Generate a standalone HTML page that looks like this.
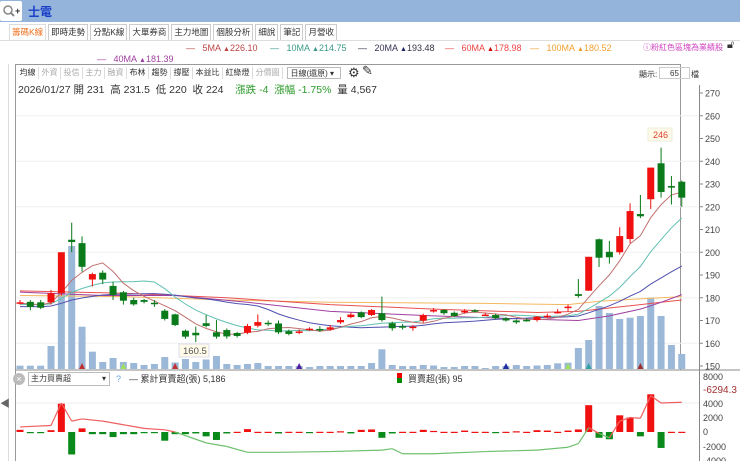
<!DOCTYPE html>
<html><head><meta charset="utf-8">
<style>
*{margin:0;padding:0;box-sizing:border-box}
body{width:740px;height:461px;overflow:hidden;background:#fff;font-family:"Liberation Sans","Noto Sans CJK TC",sans-serif;position:relative;font-size:10px;color:#333}
.top{position:absolute;left:0;top:0;width:740px;height:22px;background:#95b4dc}
.srch{position:absolute;left:0;top:1px;width:22px;height:20px;background:#fff;border-radius:2px}
.title{position:absolute;left:28px;top:3px;font-size:12px;font-weight:bold;color:#1a3fc8}
.tabs{position:absolute;left:9px;top:24px;height:17px;display:flex}
.tab{border:1px solid #ccc;border-bottom:none;padding:0 2px;height:16px;line-height:15px;font-size:8.5px;color:#333;margin-right:2px;background:#fff}
.tab.a{color:#f07020;border-color:#ddd}
.abs{position:absolute;white-space:nowrap}
.frame{position:absolute;left:15px;top:64px;width:666px;height:306px;border-left:1px solid #999;border-top:1px solid #999;border-right:1px solid #999}
.tb{position:absolute;left:17px;top:67px;display:flex;font-size:8px}
.tb span{padding:0 2.5px;border-right:1px solid #ddd;height:12px;line-height:12px}
.g{color:#aaa}
</style></head><body>
<div class="top"></div>
<div class="srch"><svg width="22" height="20"><circle cx="8" cy="9" r="4" fill="none" stroke="#888" stroke-width="1.5"/><line x1="11" y1="12" x2="14" y2="15" stroke="#888" stroke-width="2"/><text x="15" y="13" font-size="9" font-weight="bold" fill="#333">+</text></svg></div>
<div class="title">士電</div>
<div class="tabs">
<div class="tab a">籌碼K線</div><div class="tab">即時走勢</div><div class="tab">分點K線</div><div class="tab">大單券商</div><div class="tab">主力地圖</div><div class="tab">個股分析</div><div class="tab">細說</div><div class="tab">筆記</div><div class="tab">月營收</div>
</div>
<div class="abs" style="left:0;top:40px;width:740px;border-top:1px solid #ddd"></div>
<div class="abs" style="left:186px;top:43px;font-size:9px;color:#b44">—&nbsp;&nbsp; 5MA <span style="font-size:7px">▲</span>226.10</div>
<div class="abs" style="left:270px;top:43px;font-size:9px;color:#3a9a8a">—&nbsp;&nbsp; 10MA <span style="font-size:7px">▲</span>214.75</div>
<div class="abs" style="left:358px;top:43px;font-size:9px;color:#334">—&nbsp;&nbsp; <span style="color:#335">20MA</span> <span style="font-size:7px;color:#226">▲</span>193.48</div>
<div class="abs" style="left:445px;top:43px;font-size:9px;color:#e44">—&nbsp;&nbsp; 60MA <span style="font-size:7px;color:#c00">▲</span>178.98</div>
<div class="abs" style="left:530px;top:43px;font-size:9px;color:#f0a030">—&nbsp;&nbsp; 100MA <span style="font-size:7px">▲</span>180.52</div>
<div class="abs" style="left:643px;top:42px;font-size:8px;color:#d040c0">ⓘ粉紅色區塊為業績股</div>
<div class="abs" style="left:727px;top:39px;font-size:11px">🔓︎</div>
<div class="abs" style="left:97px;top:54px;font-size:9px;color:#a040a0">—&nbsp;&nbsp; 40MA <span style="font-size:7px">▲</span>181.39</div>
<div class="frame"></div>
<div class="abs" style="left:8px;top:64px;height:397px;border-left:1px solid #ddd"></div>
<div class="tb"><span>均線</span><span class="g">外資</span><span class="g">投信</span><span class="g">主力</span><span class="g">融資</span><span>布林</span><span>趨勢</span><span>撐壓</span><span>本益比</span><span>紅綠燈</span><span class="g">分價圖</span>
<span style="border:1px solid #bbb;margin-left:4px;width:54px">日線(還原) ▾</span></div>
<div class="abs" style="left:348px;top:65px;font-size:13px;color:#333">⚙︎</div>
<div class="abs" style="left:362px;top:63px;font-size:13px;color:#333">✎</div>
<div class="abs" style="left:639px;top:69px;font-size:8px">顯示:</div>
<div class="abs" style="left:659px;top:67px;width:31px;height:12px;border:1px solid #ccc;font-size:8px;text-align:center;line-height:11px">65</div>
<div class="abs" style="left:691px;top:69px;font-size:8px">檔</div>
<div class="abs" style="left:18px;top:82px;font-size:10.5px;color:#333">2026/01/27 開 231 &nbsp;高 231.5 &nbsp;低 220 &nbsp;收 224 &nbsp;&nbsp; <span style="color:#2a9a2a">漲跌 -4 &nbsp;漲幅 -1.75%</span> &nbsp;量 4,567</div>
<svg id="s" class="abs" style="left:0;top:0" width="740" height="461"></svg>
<div class="abs" style="left:13px;top:373px;width:12px;height:12px;border-radius:6px;background:#bbb;color:#fff;font-size:9px;text-align:center;line-height:12px">×</div>
<div class="abs" style="left:28px;top:372px;width:82px;height:14px;border:1px solid #bbb;font-size:8px;line-height:12px;padding-left:2px">主力買賣超 <span style="float:right;padding-right:3px">▾</span></div>
<div class="abs" style="left:116px;top:374px;font-size:9px;color:#6aa0e0">?</div>
<div class="abs" style="left:129px;top:372px;font-size:9px">— 累計買賣超(張) 5,186</div>
<div class="abs" style="left:403px;top:372px;font-size:9px">&nbsp; 買賣超(張) 95</div>
<div class="abs" style="left:397px;top:373px;width:5px;height:5px;background:#e00"></div>
<div class="abs" style="left:397px;top:378px;width:5px;height:5px;background:#080"></div>
<div class="abs" style="left:0;top:395px;font-size:10px;color:#666">◀</div>
<script>
const s=document.getElementById('s');let h='';
const X=i=>20+i*10.34, Y=p=>366-(p-150)*2.275;
h+=`<line x1="699.5" y1="85" x2="699.5" y2="461" stroke="#888"/>`;
for(let p=150;p<=270;p+=10){let y=Y(p);h+=`<line x1="699" y1="${y}" x2="703" y2="${y}" stroke="#888"/><text x="705" y="${y+3.5}" font-size="9" fill="#444">${p}</text>`;if(p%20==10&&p>150)h+=`<line x1="16" y1="${Y(p-10)}" x2="699" y2="${Y(p-10)}" stroke="#f0f0f0"/>`}
const C=[[177.5,178,179,177],[178.2,176,179,174.5],[178,175.6,179,175],[178,182,183.5,177],[182,200,200,181],[205.5,204.5,213,200],[204,193.6,207,191.5],[188,190.4,191,185],[191,188,192,186],[185.2,181.2,187,179],[182.4,178.7,183,177],[179,177.1,180,176.5],[179,178.2,179.5,177.5],[177.8,177.5,179,176],[174.3,170.7,175,170],[172.7,168,173,167.5],[165.5,162.9,166,162],[164.6,163.5,167.3,160.5],[168.8,167.6,172.4,167],[164.8,162.9,170.2,162],[165.8,163,166.5,162],[164.5,163.2,165,162.5],[164.6,167.6,168.5,164],[167.7,169.3,172.7,167],[169,168.8,170,167.5],[168.7,164.8,170,164],[165.3,164.1,166,163.5],[165,165.2,166,164],[166.3,166.4,167,165.5],[166.3,166.2,167.5,165],[166,167,168,165.5],[169.2,170.2,171.5,168.5],[171.5,172.6,173.5,171],[173.6,171.5,174,171],[172.4,174.6,175,172],[173.2,170.2,180.5,169.5],[168.8,166.6,169.5,165.5],[167.5,167.4,168.5,166],[166.8,167.3,168,165.5],[169.9,172.4,173,169],[174.5,174.6,175.5,173.5],[174.6,173.2,175,172.5],[173.4,172,174,171.5],[174,174.2,175,173],[174.5,174.4,175,173.5],[172.5,172.6,173.5,172],[172.4,171,173,170.5],[171,170,171.5,169.5],[170,169.2,170.5,168.5],[170.3,170.2,171,169.5],[170.2,171.7,172,169.5],[172,172.1,173,171],[173.7,173.8,175,173],[176,176.1,177,174],[181.6,180.8,188.2,180],[183.1,198,198,183],[205.7,197.6,206,193.5],[200.2,197.8,205,195],[200,207.1,211,199],[205.8,218.1,221.5,204],[216.8,215.8,225.2,215],[223.3,237.2,237.2,219],[239.1,226.5,246,224],[229.1,228.4,233.5,221],[231,224,231.5,220]];
const V=[365.7,365.7,365.7,346,293,246,326.7,351.7,362,358,362,363,365,364,357,362.5,359,362,359.5,356,364,365,364,363,366,366,366,366,367,366,366,366,366,366,363,349.3,365,366,366,365,365.5,367,367,366,366,368,366,366,365,366,365.5,365,363.3,362.7,348,340,306,313,319,317.7,316,297.7,316,345,354];
V.forEach((t,i)=>{h+=`<rect x="${X(i)-3.5}" y="${t}" width="7" height="${369-t}" fill="#9bb8d8"/>`});
[[6,'#c03030'],[10,'#a0e060'],[15,'#c03030'],[27,'#5020a0'],[47,'#2030a0'],[53,'#a0e060'],[55,'#30a0a0'],[60,'#a03030']].forEach(([i,c])=>{h+=`<polygon points="${X(i)-3},369 ${X(i)+3},369 ${X(i)},363" fill="${c}"/>`});
const cl=C.map(c=>c[1]);
function ma(n,pad){let a=[];for(let i=0;i<cl.length;i++){let s=0;for(let k=i-n+1;k<=i;k++)s+=k<0?pad:cl[k];a.push(s/n)}return a}
function pl(pts,c){return `<polyline points="${pts.map(([i,p])=>X(i).toFixed(1)+','+Y(p).toFixed(1)).join(' ')}" fill="none" stroke="${c}" stroke-width="1"/>`}
h+=pl([[0,181],[10,180.5],[20,179],[30,178],[45,177.5],[53,177],[56,178.5],[60,179.5],[64,180.5]],'#f4b860');
h+=pl([[0,183],[10,182],[20,180],[30,177],[40,175],[50,173.5],[54,174],[58,176],[62,178],[64,179]],'#e85050');
h+=pl([[0,182.5],[8,181],[15,181],[22,178],[30,174],[40,172],[50,170.5],[54,170],[57,172],[60,175],[62,178],[64,181.4]],'#a040a0');
h+=pl(ma(20,176).map((p,i)=>[i,p]),'#5050b0');
h+=pl(ma(10,177).map((p,i)=>[i,p]),'#60c0b0');
h+=pl(ma(5,177.5).map((p,i)=>[i,p]),'#c07070');
C.forEach(([o,c,hi,lo],i)=>{let x=X(i),col=c>=o?'#f01010':'#0a7a1a';let t=Y(Math.max(o,c)),b=Y(Math.min(o,c));
h+=`<line x1="${x}" y1="${Y(hi)}" x2="${x}" y2="${Y(lo)}" stroke="${col}"/><rect x="${x-3.5}" y="${t}" width="7" height="${Math.max(b-t,1.5)}" fill="${col}"/>`});
h+=`<rect x="648" y="128" width="24" height="13" fill="#fffbe8" stroke="#eed"/><text x="653" y="138" font-size="9" fill="#e04030">246</text>`;
h+=`<rect x="179" y="344" width="30" height="13" fill="#fffbe8" stroke="#dde"/><text x="183" y="354" font-size="9.5" fill="#555">160.5</text>`;
h+=`<line x1="15" y1="370" x2="740" y2="370" stroke="#888"/><line x1="15.5" y1="370" x2="15.5" y2="461" stroke="#999"/>`;
const Z=432,K=14.5/2000,YL=v=>Z-v*K;
h+=`<line x1="16" y1="${YL(4000)}" x2="699" y2="${YL(4000)}" stroke="#eee"/>`;
[[8000,377],[4000,404],[2000,418],[0,432],[-2000,447],[-4000,461]].forEach(([v,y])=>{h+=`<text x="703" y="${y+3}" font-size="9" fill="#444">${v}</text>`});
h+=`<text x="703" y="393" font-size="10" fill="#a03030">-6294.3</text>`;
const B={0:300,1:-50,3:250,4:3900,5:-3100,6:500,7:-300,8:-300,9:-700,10:-300,11:-300,12:-50,13:-50,14:-1200,15:-300,16:-300,17:-200,18:-600,19:-1100,20:-200,22:400,24:30,25:-200,26:30,30:30,31:100,32:-200,33:300,34:350,35:-800,36:-200,37:30,38:30,39:300,40:150,41:30,42:30,43:200,44:30,45:30,46:-100,47:30,48:100,49:30,50:250,51:200,52:30,53:200,54:350,55:3700,56:-800,57:-1000,58:2300,59:2000,60:-600,61:5200,62:-2200,63:30,64:30};
for(let i=0;i<65;i++){let v=B[i]||0;if(!(i in B))v=i%2?30:-30;let y1=YL(Math.max(v,0)),y2=YL(Math.min(v,0));h+=`<rect x="${X(i)-3.5}" y="${y1}" width="7" height="${Math.max(y2-y1,1.2)}" fill="${v>=0?'#f01010':'#0a8a1a'}"/>`}
const L=[[0,700],[3,900],[4,4000],[5,1500],[6,1800],[8,1500],[10,1000],[12,500],[14,300],[15,0],[18,-1500],[20,-2000],[22,-2800],[25,-2800],[30,-2700],[35,-2500],[36,-2300],[37,-3000],[40,-3000],[45,-2700],[50,-2500],[53,-2100],[54,-1600],[55,600],[56,-200],[57,-800],[58,1500],[59,2000],[60,1900],[61,5000],[62,4000],[64,4100]];
for(let k=0;k<L.length-1;k++){let [i1,v1]=L[k],[i2,v2]=L[k+1];h+=`<line x1="${X(i1)}" y1="${YL(v1)}" x2="${X(i2)}" y2="${YL(v2)}" stroke="${(v1+v2)/2>=0?'#f06060':'#70c070'}" stroke-width="1.2"/>`}
s.innerHTML=h;
</script>
</body></html>
